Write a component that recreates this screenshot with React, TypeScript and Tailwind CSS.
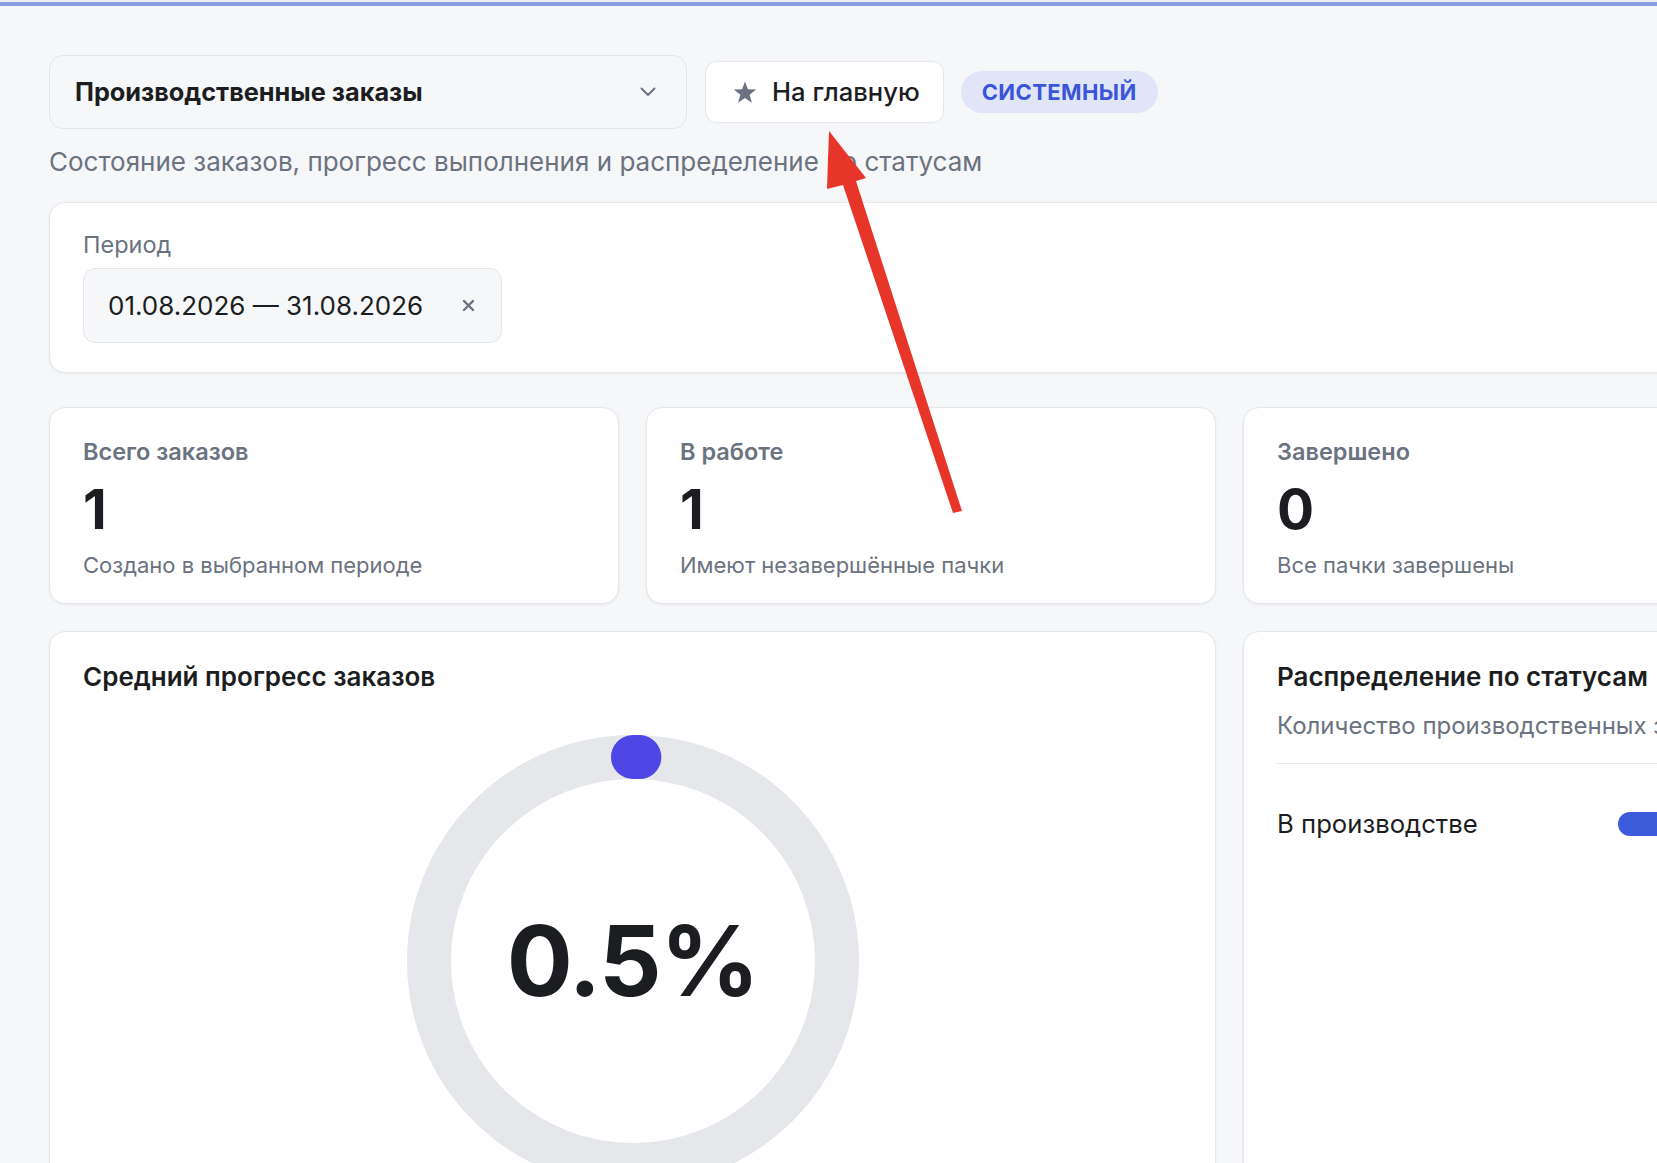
import React from "react";

function Chevron() {
  return (
    <svg width="16" height="10" viewBox="0 0 16 10" fill="none">
      <path d="M1.5 1.5 L8 8 L14.5 1.5" stroke="#6b7280" strokeWidth="2" strokeLinecap="round" strokeLinejoin="round" />
    </svg>
  );
}

function Star() {
  return (
    <svg width="24" height="23" viewBox="0 0 24 23">
      <polygon
        points="12,0.5 14.9,8.3 23.2,8.6 16.6,13.7 18.9,21.7 12,17 5.1,21.7 7.4,13.7 0.8,8.6 9.1,8.3"
        fill="#6b7280"
      />
    </svg>
  );
}

function Cross() {
  return (
    <svg width="13" height="13" viewBox="0 0 13 13">
      <path d="M2 2 L11 11 M11 2 L2 11" stroke="#6b7280" strokeWidth="2.4" strokeLinecap="round" />
    </svg>
  );
}

function StatCard({ label, value, desc }: { label: string; value: string; desc: string }) {
  return (
    <div className="h-[197px] rounded-[16px] border border-[#e5e7eb] bg-white px-[33px] pt-[28px] shadow-[0_1px_3px_rgba(16,24,40,0.06)]">
      <div className="text-[23.5px] leading-[32px] font-semibold text-[#6b7280]">{label}</div>
      <div className="mt-[14px] text-[55px] leading-[54px] font-bold text-[#1c1d21]">{value}</div>
      <div className="mt-[14px] text-[22px] leading-[30px] text-[#6b7280]">{desc}</div>
    </div>
  );
}

function Donut() {
  const r = 204;
  const c = 2 * Math.PI * r;
  const p = 0.005 * c;
  return (
    <div className="relative w-[452px] h-[452px]">
      <svg width="452" height="452" viewBox="0 0 452 452">
        <circle cx="226" cy="226" r={r} fill="none" stroke="#e5e7eb" strokeWidth="44" />
        <circle
          cx="226"
          cy="226"
          r={r}
          fill="none"
          stroke="#4f46e5"
          strokeWidth="44"
          strokeLinecap="round"
          strokeDasharray={`${p} ${c}`}
          transform="rotate(-90 226 226)"
        />
      </svg>
      <div className="absolute inset-0 flex items-center justify-center">
        <span className="text-[98px] leading-none font-bold text-[#1c1d21] tracking-[-1.5px]">0.5%</span>
      </div>
    </div>
  );
}

export default function App() {
  return (
    <div className="relative w-[1657px] h-[1163px] overflow-hidden bg-[#f6f7f9] font-['Inter','Noto_Sans',sans-serif]">
      <div className="h-[2px] bg-[#eef0f4]" />
      <div className="h-[4px] bg-[#8b9fe6]" />
      <div className="w-[1862px] px-[49px] pt-[49px]">
        <div className="flex items-center">
          <div className="flex h-[74px] w-[638px] items-center justify-between rounded-[14px] border border-[#e4e6ea] bg-[#f6f7f9] pl-[25px] pr-[30px]">
            <span className="text-[25.3px] font-bold text-[#1c1d21]">Производственные заказы</span>
            <Chevron />
          </div>
          <div className="ml-[18px] flex h-[62px] items-center gap-[15px] rounded-[12px] border border-[#e4e6ea] bg-white pl-[27px] pr-[23px]">
            <Star />
            <span className="text-[25.6px] font-medium text-[#1c1d21]">На главную</span>
          </div>
          <div className="ml-[17px] flex h-[42px] items-center rounded-full bg-[#e0e6f8] px-[21px] text-[22px] font-bold tracking-[0.4px] text-[#3b55d9]">
            СИСТЕМНЫЙ
          </div>
        </div>
        <div className="mt-[15px] text-[26px] leading-[36px] text-[#6b7280]">
          Состояние заказов, прогресс выполнения и распределение по статусам
        </div>

        <div className="mt-[22px] h-[171px] rounded-[16px] border border-[#e5e7eb] bg-white px-[33px] pt-[27px] shadow-[0_1px_3px_rgba(16,24,40,0.06)]">
          <div className="text-[23.5px] leading-[30px] text-[#6b7280]">Период</div>
          <div className="mt-[8px] flex h-[75px] w-[419px] items-center justify-between rounded-[12px] border border-[#e4e6ea] bg-[#f6f7f9] pl-[24px] pr-[26px]">
            <span className="text-[26px] text-[#1c1d21]">01.08.2026 — 31.08.2026</span>
            <Cross />
          </div>
        </div>

        <div className="mt-[34px] grid grid-cols-3 gap-[27px]">
          <StatCard label="Всего заказов" value="1" desc="Создано в выбранном периоде" />
          <StatCard label="В работе" value="1" desc="Имеют незавершённые пачки" />
          <StatCard label="Завершено" value="0" desc="Все пачки завершены" />
        </div>

        <div className="mt-[27px] grid grid-cols-3 gap-[27px]">
          <div className="col-span-2 h-[600px] rounded-[16px] border border-[#e5e7eb] bg-white px-[33px] pt-[29px] shadow-[0_1px_3px_rgba(16,24,40,0.06)]">
            <div className="text-[26px] leading-[32px] font-semibold text-[#1c1d21]">Средний прогресс заказов</div>
            <div className="mt-[42px] flex justify-center">
              <Donut />
            </div>
          </div>
          <div className="h-[600px] rounded-[16px] border border-[#e5e7eb] bg-white px-[33px] pt-[29px] shadow-[0_1px_3px_rgba(16,24,40,0.06)]">
            <div className="text-[26px] leading-[32px] font-semibold text-[#1c1d21]">Распределение по статусам</div>
            <div className="mt-[15px] border-b border-[#e5e7eb] pb-[19px] text-[24px] leading-[36px] text-[#6b7280] whitespace-nowrap">
              Количество производственных заказов по статусам
            </div>
            <div className="mt-[42px] flex items-center">
              <div className="w-[341px] shrink-0 text-[25.7px] leading-[36px] text-[#1c1d21]">В производстве</div>
              <div className="h-[24px] flex-1 rounded-full bg-[#3b5bdb]" />
            </div>
          </div>
        </div>
      </div>

      <svg className="pointer-events-none absolute left-0 top-0" width="1657" height="1163" viewBox="0 0 1657 1163">
        <polygon
          points="829,131 866,178 856,181 962,511 953,513 843,185 827,189"
          fill="#e8352a"
        />
      </svg>
    </div>
  );
}
